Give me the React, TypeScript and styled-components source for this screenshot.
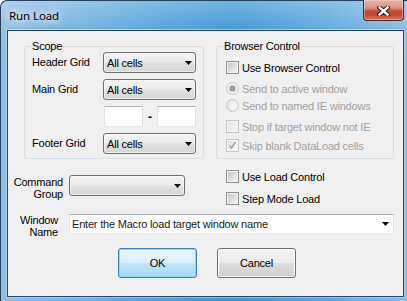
import React from 'react';
import styled, { createGlobalStyle } from 'styled-components';

const GlobalStyle = createGlobalStyle`
  html, body {
    margin: 0;
    padding: 0;
    background: #ffffff;
  }
  body {
    font-family: 'Liberation Sans', Arial, sans-serif;
    font-size: 11px;
    letter-spacing: -0.2px;
    color: #000;
  }
`;

const scopeRows = ['Header Grid', 'Main Grid', '', 'Footer Grid'];

const browserOptions = [
  { kind: 'check', text: 'Use Browser Control', top: 7, disabled: false, on: false },
  { kind: 'radio', text: 'Send to active window', top: 4, disabled: true, on: true },
  { kind: 'radio', text: 'Send to named IE windows', top: 0, disabled: true, on: false },
  { kind: 'check', text: 'Stop if target window not IE', top: 4, disabled: true, on: false },
  { kind: 'check', text: 'Skip blank DataLoad cells', top: 2, disabled: true, on: true },
];

const Arrow = () => (
  <ArrowIcon width="7" height="4" viewBox="0 0 7 4">
    <polygon points="0,0 7,0 3.5,4" fill="#000" />
  </ArrowIcon>
);

const Check = ({ disabled, on }: { disabled: boolean; on: boolean }) => (
  <CheckBox $disabled={disabled}>
    {on && (
      <svg width="9" height="9" viewBox="0 0 9 9">
        <path d="M1.5 4.5 L3.5 7 L7.5 1" fill="none" stroke={disabled ? '#a2a2a2' : '#1c3a72'} strokeWidth="1.6" />
      </svg>
    )}
  </CheckBox>
);

const Option = ({ kind, text, top, disabled, on }: any) => (
  <OptionRow $top={top} $disabled={disabled}>
    {kind === 'radio' ? <Radio $on={on} /> : <Check disabled={disabled} on={on} />}
    <span>{text}</span>
  </OptionRow>
);

const App = () => {
  return (
    <>
      <GlobalStyle />
      <Frame>
        <TitleBar>
          <Caption>Run Load</Caption>
          <CloseButton>
            <svg width="13" height="10" viewBox="0 0 13 10">
              <path d="M2.5 1.5 L10.5 8.5 M10.5 1.5 L2.5 8.5" stroke="#3a1410" strokeWidth="4.4" strokeLinecap="square" />
              <path d="M2.5 1.5 L10.5 8.5 M10.5 1.5 L2.5 8.5" stroke="#ffffff" strokeWidth="2.4" strokeLinecap="square" />
            </svg>
          </CloseButton>
        </TitleBar>
        <Client>
          <TopRow>
            <Group $width={180}>
              <Legend>Scope</Legend>
              <ScopeGrid>
                {scopeRows.map((label, idx) => (
                  <React.Fragment key={idx}>
                    <GridLabel>{label}</GridLabel>
                    {label ? (
                      <Combo $width={93}>
                        <span>All cells</span>
                        <Arrow />
                      </Combo>
                    ) : (
                      <RangeBox>
                        <Edit />
                        <Dash>-</Dash>
                        <Edit />
                      </RangeBox>
                    )}
                  </React.Fragment>
                ))}
              </ScopeGrid>
            </Group>
            <Group $width={178}>
              <Legend>Browser Control</Legend>
              <OptionList>
                {browserOptions.map((opt, idx) => (
                  <Option key={idx} {...opt} />
                ))}
              </OptionList>
            </Group>
          </TopRow>

          <MiddleRow>
            <LeftPane>
              <SideLabel $pad={0}>
                Command
                <br />
                Group
              </SideLabel>
              <Combo $width={116} style={{ marginTop: 7 }}>
                <span />
                <Arrow />
              </Combo>
            </LeftPane>
            <RightPane>
              <Option kind="check" text="Use Load Control" top={0} disabled={false} on={false} />
              <Option kind="check" text="Step Mode Load" top={5} disabled={false} on={false} />
            </RightPane>
          </MiddleRow>

          <WindowRow>
            <SideLabel $pad={5}>
              Window
              <br />
              Name
            </SideLabel>
            <TextCombo>
              <span>Enter the Macro load target window name</span>
              <Arrow />
            </TextCombo>
          </WindowRow>

          <ActionRow>
            <Button $primary>OK</Button>
            <Button>Cancel</Button>
          </ActionRow>
        </Client>
      </Frame>
    </>
  );
};

export default App;

const Frame = styled.div`
  width: 407px;
  height: 301px;
  box-sizing: border-box;
  display: flex;
  flex-direction: column;
  padding: 0 3px 4px 6px;
  border-top: 1px solid #24415c;
  border-left: 1px solid #24415c;
  border-radius: 7px 0 0 0;
  background:
    linear-gradient(180deg, rgba(255, 255, 255, 0.28) 0px, rgba(255, 255, 255, 0.05) 28px, rgba(255, 255, 255, 0) 60px),
    linear-gradient(90deg, #8ec0e4 0%, #72b2df 18%, #4fa0d8 40%, #3d96d3 58%, #5ba7db 80%, #85bce3 100%);
`;

const TitleBar = styled.div`
  display: flex;
  align-items: center;
  height: 29px;
  padding-left: 2px;
`;

const Caption = styled.span`
  font-family: 'Noto Sans', 'Liberation Sans', sans-serif;
  font-size: 11.5px;
  letter-spacing: -0.1px;
  color: #000;
  text-shadow: 0 0 6px rgba(255, 255, 255, 0.95), 0 0 10px rgba(255, 255, 255, 0.8), 0 0 14px rgba(255, 255, 255, 0.6);
`;

const CloseButton = styled.div`
  margin-left: auto;
  align-self: flex-start;
  margin-top: -1px;
  width: 41px;
  height: 21px;
  box-sizing: border-box;
  display: flex;
  align-items: center;
  justify-content: center;
  padding-top: 2px;
  border: 1px solid #5b201b;
  border-top: none;
  border-radius: 0 0 4px 4px;
  background: linear-gradient(180deg, #e7b4aa 0%, #d99385 40%, #c74a36 55%, #c24832 75%, #d5775c 100%);
  box-shadow: inset 0 0 0 1px rgba(255, 210, 200, 0.45);
`;

const Client = styled.div`
  flex: 1;
  display: flex;
  flex-direction: column;
  background: #f0f0f0;
  border: 1px solid #24476a;
  box-shadow: 0 0 0 1px rgba(200, 230, 250, 0.5);
`;

const TopRow = styled.div`
  display: flex;
  align-items: stretch;
  gap: 12px;
  padding: 9px 0 0 16px;
`;

const Group = styled.fieldset<{ $width: number }>`
  width: ${(p) => p.$width}px;
  box-sizing: border-box;
  min-inline-size: 0;
  margin: 0;
  padding: 0 7px 4px 7px;
  border: 1px solid #d5dfe5;
  border-radius: 3px;
`;

const Legend = styled.legend`
  padding: 0 1px;
  margin-left: -1px;
  line-height: 12px;
  font-size: 11px;
`;

const ScopeGrid = styled.div`
  display: grid;
  grid-template-columns: 71px 93px;
  grid-auto-rows: 21px;
  row-gap: 6px;
  align-items: center;
`;

const GridLabel = styled.span`
  line-height: 12px;
  margin-top: -1px;
`;

const Combo = styled.div<{ $width: number }>`
  width: ${(p) => p.$width}px;
  height: 21px;
  box-sizing: border-box;
  display: flex;
  align-items: center;
  justify-content: space-between;
  padding: 0 3px 0 3px;
  border: 1px solid #707070;
  border-radius: 3px;
  background: linear-gradient(180deg, #f3f3f3 0%, #ececec 48%, #e0e0e0 52%, #d6d6d6 100%);
  box-shadow: inset 0 0 0 1px rgba(255, 255, 255, 0.55);
`;

const ArrowIcon = styled.svg`
  flex: none;
  display: block;
`;

const RangeBox = styled.div`
  display: flex;
  align-items: center;
  margin-left: 1px;
`;

const Edit = styled.div`
  width: 39px;
  height: 21px;
  box-sizing: border-box;
  background: #fff;
  border: 1px solid;
  border-color: #abadb3 #dbdfe6 #e3e9ef #e2e3ea;
`;

const Dash = styled.span`
  width: 15px;
  text-align: center;
  font-weight: bold;
  font-size: 12px;
`;

const OptionList = styled.div`
  display: flex;
  flex-direction: column;
  margin-left: 2px;
`;

const OptionRow = styled.label<{ $top: number; $disabled: boolean }>`
  display: flex;
  align-items: center;
  gap: 3px;
  height: 17px;
  margin-top: ${(p) => p.$top}px;
  color: ${(p) => (p.$disabled ? '#a0a0a0' : '#000')};
  white-space: nowrap;
`;

const CheckBox = styled.span<{ $disabled: boolean }>`
  flex: none;
  width: 13px;
  height: 13px;
  box-sizing: border-box;
  display: flex;
  align-items: center;
  justify-content: center;
  padding: 1px;
  border: 1px solid ${(p) => (p.$disabled ? '#c6c6c6' : '#8e8f8f')};
  background: ${(p) =>
    p.$disabled
      ? 'linear-gradient(135deg, #e4e4e4, #f7f7f7) content-box, #f7f7f7 padding-box'
      : 'linear-gradient(135deg, #c2c6cc, #f1f1f1) content-box, #f4f4f4 padding-box'};
`;

const Radio = styled.span<{ $on: boolean }>`
  flex: none;
  width: 13px;
  height: 13px;
  box-sizing: border-box;
  border-radius: 50%;
  border: 1px solid #c4c4c4;
  background: ${(p) =>
    p.$on
      ? 'radial-gradient(circle, #9c9c9c 0 2.5px, #c9c9c9 3px 3.5px, #f2f2f2 4px)'
      : 'radial-gradient(circle at 60% 60%, #f6f6f6, #e2e2e2)'};
`;

const MiddleRow = styled.div`
  display: flex;
  margin-top: 9px;
`;

const LeftPane = styled.div`
  width: 208px;
  display: flex;
  align-items: flex-start;
  gap: 6px;
`;

const SideLabel = styled.div<{ $pad: number }>`
  width: 55px;
  box-sizing: border-box;
  padding-right: ${(p) => p.$pad}px;
  margin-top: ${(p) => (p.$pad ? 0 : 8)}px;
  text-align: right;
  line-height: 12px;
`;

const RightPane = styled.div`
  display: flex;
  flex-direction: column;
  padding-left: 10px;
`;

const WindowRow = styled.div`
  display: flex;
  align-items: flex-start;
  gap: 6px;
  margin-top: 7px;
`;

const TextCombo = styled.div`
  width: 325px;
  height: 20px;
  box-sizing: border-box;
  display: flex;
  align-items: center;
  justify-content: space-between;
  padding: 0 4px 0 2px;
  background: #fff;
  border: 1px solid;
  border-color: #abadb3 #dbdfe6 #e3e9ef #e2e3ea;
  color: #1a1a1a;
`;

const ActionRow = styled.div`
  display: flex;
  gap: 20px;
  padding-left: 110px;
  margin-top: 10px;
`;

const Button = styled.div<{ $primary?: boolean }>`
  width: 79px;
  height: 30px;
  box-sizing: border-box;
  display: flex;
  align-items: center;
  justify-content: center;
  border-radius: 3px;
  border: 1px solid ${(p) => (p.$primary ? '#3c7fb1' : '#707070')};
  background: ${(p) =>
    p.$primary
      ? 'linear-gradient(180deg, #eaf6fd 0%, #d9f0fc 48%, #bee6fd 52%, #a7d9f5 100%)'
      : 'linear-gradient(180deg, #f2f2f2 0%, #ebebeb 48%, #dddddd 52%, #cfcfcf 100%)'};
  box-shadow: ${(p) => (p.$primary ? 'inset 0 0 0 1px #8fd3f7' : 'inset 0 0 0 1px #fcfcfc')};
`;
